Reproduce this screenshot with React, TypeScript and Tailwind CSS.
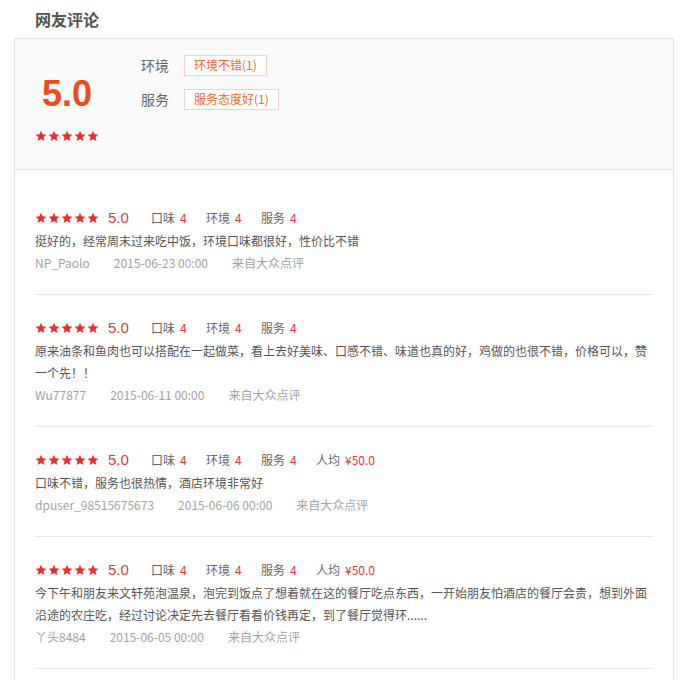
import React from "react";

const FONT = { fontFamily: '"Noto Sans CJK SC", "Liberation Sans", sans-serif' };

type Review = {
  user: string;
  date: string;
  text: string;
  price?: string;
};

const reviews: Review[] = [
  {
    user: "NP_Paolo",
    date: "2015-06-23 00:00",
    text: "挺好的，经常周末过来吃中饭，环境口味都很好，性价比不错",
  },
  {
    user: "Wu77877",
    date: "2015-06-11 00:00",
    text: "原来油条和鱼肉也可以搭配在一起做菜，看上去好美味、口感不错、味道也真的好，鸡做的也很不错，价格可以，赞一个先！！",
  },
  {
    user: "dpuser_98515675673",
    date: "2015-06-06 00:00",
    text: "口味不错，服务也很热情，酒店环境非常好",
    price: "¥50.0",
  },
  {
    user: "丫头8484",
    date: "2015-06-05 00:00",
    text: "今下午和朋友来文轩苑泡温泉，泡完到饭点了想着就在这的餐厅吃点东西，一开始朋友怕酒店的餐厅会贵，想到外面沿途的农庄吃，经过讨论决定先去餐厅看看价钱再定，到了餐厅觉得环......",
    price: "¥50.0",
  },
];

// small five-point star
function Star() {
  return (
    <svg width="12" height="12" viewBox="0 0 24 24" className="shrink-0">
      <path
        d="M12 1.5l3.1 7.2 7.8.7-5.9 5.1 1.8 7.6L12 18.1l-6.8 4 1.8-7.6-5.9-5.1 7.8-.7z"
        fill="#e8312f"
      />
    </svg>
  );
}

function Stars() {
  return (
    <div className="flex gap-[1px]">
      <Star />
      <Star />
      <Star />
      <Star />
      <Star />
    </div>
  );
}

function Score({ label, value }: { label: string; value: string }) {
  return (
    <div className="w-[55px] shrink-0 whitespace-nowrap text-[12px] text-[#666]">
      {label}
      <span className="ml-[5px] text-[#e4393c]">{value}</span>
    </div>
  );
}

function ReviewItem({ r }: { r: Review }) {
  return (
    <div className="border-b border-[#e8e8e8] pt-[21px] pb-[20px]">
      <div className="flex h-[24px] items-center">
        <Stars />
        <span
          className="ml-[9px] w-[43px] text-[15px] font-light text-[#e4393c]"
          style={{ fontFamily: '"Liberation Sans", sans-serif' }}
        >
          5.0
        </span>
        <Score label="口味" value="4" />
        <Score label="环境" value="4" />
        <Score label="服务" value="4" />
        {r.price && <Score label="人均" value={r.price} />}
      </div>
      <p className="text-[12px] leading-[22px] text-[#555]">{r.text}</p>
      <div className="flex gap-6 text-[12px] leading-[22px] text-[#a3a3a3]">
        <span>{r.user}</span>
        <span>{r.date}</span>
        <span>来自大众点评</span>
      </div>
    </div>
  );
}

export default function App() {
  return (
    <div className="min-h-screen bg-white px-[14px]" style={FONT}>
      <h2 className="flex h-[38px] items-center pl-[21px] text-[16px] font-bold text-[#555]">
        网友评论
      </h2>

      <div className="border border-[#e5e5e5]">
        {/* summary */}
        <div className="flex h-[131px] border-b border-[#e5e5e5] bg-[#fafafa]">
          <div className="w-[126px] shrink-0 pl-[20px]">
            <div className="flex w-[64px] flex-col items-center pt-[36px]">
              <div
                className="text-[36px] font-bold leading-[38px] text-[#ef4a1c]"
                style={{ fontFamily: '"Liberation Sans", sans-serif' }}
              >
                5.0
              </div>
              <div className="mt-[17px]">
                <Stars />
              </div>
            </div>
          </div>
          <div className="flex flex-col gap-[14px] pt-[16px]">
            <div className="flex h-[20px] items-center">
              <span className="w-[43px] text-[14px] text-[#666]">环境</span>
              <span className="flex h-[21px] items-center border border-[#f6d3c1] bg-white px-[9px] text-[12px] text-[#f0682a]">
                环境不错(1)
              </span>
            </div>
            <div className="flex h-[20px] items-center">
              <span className="w-[43px] text-[14px] text-[#666]">服务</span>
              <span className="flex h-[21px] items-center border border-[#f6d3c1] bg-white px-[9px] text-[12px] text-[#f0682a]">
                服务态度好(1)
              </span>
            </div>
          </div>
        </div>

        {/* list */}
        <div className="px-[20px] pt-[15px] pb-[20px]">
          {reviews.map((r) => (
            <ReviewItem key={r.user} r={r} />
          ))}
        </div>
      </div>
    </div>
  );
}
